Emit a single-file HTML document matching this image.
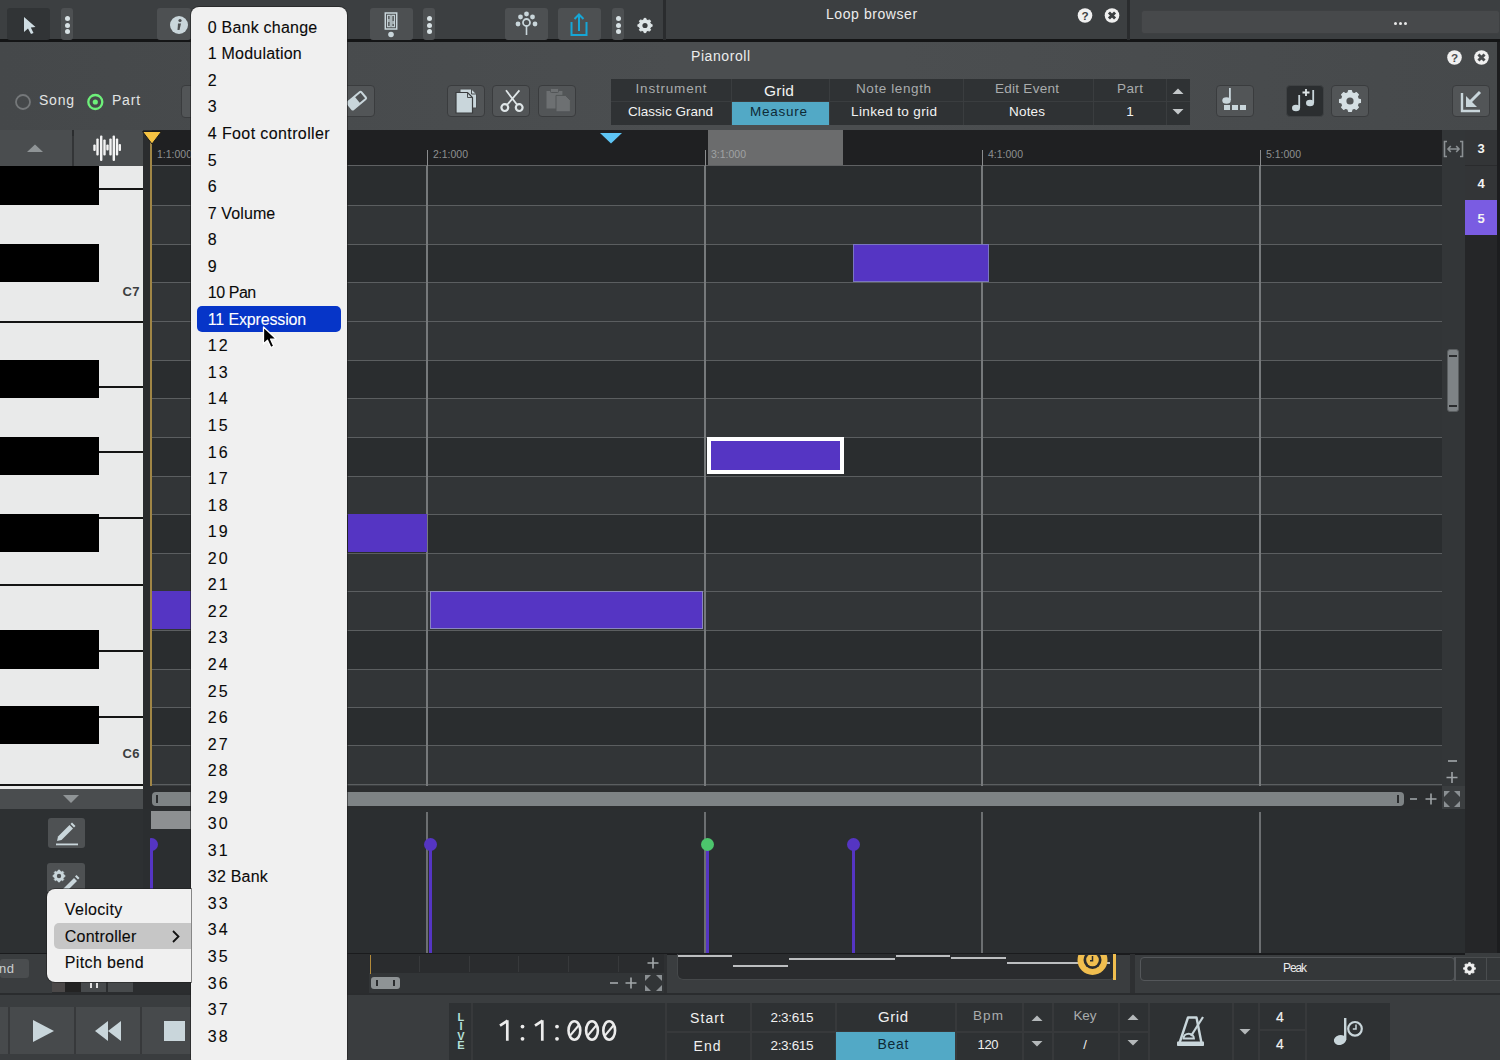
<!DOCTYPE html>
<html><head><meta charset="utf-8">
<style>
*{margin:0;padding:0;box-sizing:border-box}
html,body{width:1500px;height:1060px;overflow:hidden;background:#3b3e40;font-family:"Liberation Sans",sans-serif}
.a{position:absolute}
.t{position:absolute;white-space:nowrap;line-height:1}
svg{position:absolute;overflow:visible}
</style></head><body>
<div class="a" style="left:0px;top:0px;width:1500px;height:40px;background:#3c3f41"></div>
<div class="a" style="left:0px;top:39px;width:1500px;height:3px;background:#141516"></div>
<div class="a" style="left:7px;top:8px;width:43px;height:32px;background:#313436;border-radius:3px"></div>
<svg style="left:7px;top:8px;" width="43" height="32" viewBox="0 0 43 32"><path d="M17 9 L17 24 L21 20.5 L24 26 L26.5 25 L23.8 19.5 L28.5 19 Z" fill="#cfdde3"/></svg>
<div class="a" style="left:61px;top:8px;width:12px;height:32px;background:#4d5052;border-radius:3px"></div>
<div class="a" style="left:64.5px;top:16.0px;width:5px;height:5px;background:#d7e1e4;border-radius:50%"></div>
<div class="a" style="left:64.5px;top:22.5px;width:5px;height:5px;background:#d7e1e4;border-radius:50%"></div>
<div class="a" style="left:64.5px;top:29.0px;width:5px;height:5px;background:#d7e1e4;border-radius:50%"></div>
<div class="a" style="left:157px;top:8px;width:34px;height:32px;background:#4d5052;border-radius:3px"></div>
<svg style="left:157px;top:8px;" width="34" height="32" viewBox="0 0 34 32"><circle cx="22" cy="17" r="9" fill="#c9d6db"/><circle cx="23" cy="12.5" r="1.6" fill="#4d5052"/><path d="M21 15.5 L24 15.5 L22.5 22 L20.5 22 Z" fill="#4d5052"/></svg>
<div class="a" style="left:370px;top:8px;width:43px;height:32px;background:#4d5052;border-radius:3px"></div>
<svg style="left:370px;top:8px;" width="43" height="32" viewBox="0 0 43 32"><rect x="15.3" y="5" width="11.4" height="16" fill="none" stroke="#c9d6db" stroke-width="1.5"/><rect x="17.6" y="7.3" width="2.6" height="11.4" fill="none" stroke="#c9d6db" stroke-width="1.1"/><rect x="21.8" y="7.3" width="2.6" height="11.4" fill="none" stroke="#c9d6db" stroke-width="1.1"/><rect x="18.3" y="11" width="1.2" height="3" fill="#c9d6db"/><rect x="22.5" y="13" width="1.2" height="3" fill="#c9d6db"/><circle cx="21" cy="26.5" r="2.8" fill="#c9d6db"/></svg>
<div class="a" style="left:423px;top:8px;width:12px;height:32px;background:#4d5052;border-radius:3px"></div>
<div class="a" style="left:426.5px;top:16.0px;width:5px;height:5px;background:#d7e1e4;border-radius:50%"></div>
<div class="a" style="left:426.5px;top:22.5px;width:5px;height:5px;background:#d7e1e4;border-radius:50%"></div>
<div class="a" style="left:426.5px;top:29.0px;width:5px;height:5px;background:#d7e1e4;border-radius:50%"></div>
<div class="a" style="left:505px;top:8px;width:43px;height:32px;background:#4d5052;border-radius:3px"></div>
<svg style="left:505px;top:8px;" width="43" height="32" viewBox="0 0 43 32"><g fill="#c9d6db"><circle cx="21.5" cy="6" r="2.4"/><circle cx="15.5" cy="9" r="2.4"/><circle cx="27.5" cy="9" r="2.4"/><circle cx="13" cy="16" r="2.4"/><circle cx="30" cy="16" r="2.4"/></g><circle cx="21.5" cy="14.5" r="3.5" fill="none" stroke="#c9d6db" stroke-width="1.8"/><rect x="20.7" y="18" width="1.6" height="9" fill="#c9d6db"/></svg>
<div class="a" style="left:558px;top:8px;width:43px;height:32px;background:#4d5052;border-radius:3px"></div>
<svg style="left:558px;top:8px;" width="43" height="32" viewBox="0 0 43 32"><path d="M13.5 14 L13.5 27 L28.5 27 L28.5 14" fill="none" stroke="#16a6d6" stroke-width="2"/><path d="M21 23 L21 7 M16.5 11 L21 6.5 L25.5 11" fill="none" stroke="#16a6d6" stroke-width="2"/></svg>
<div class="a" style="left:612px;top:8px;width:12px;height:32px;background:#4d5052;border-radius:3px"></div>
<div class="a" style="left:615.5px;top:16.0px;width:5px;height:5px;background:#d7e1e4;border-radius:50%"></div>
<div class="a" style="left:615.5px;top:22.5px;width:5px;height:5px;background:#d7e1e4;border-radius:50%"></div>
<div class="a" style="left:615.5px;top:29.0px;width:5px;height:5px;background:#d7e1e4;border-radius:50%"></div>
<svg style="left:630px;top:10px;" width="30" height="30" viewBox="0 0 30 30"><polygon points="20.60,14.16 22.14,14.54 22.14,16.46 20.60,16.84 19.91,18.51 20.72,19.87 19.37,21.22 18.01,20.41 16.34,21.10 15.96,22.64 14.04,22.64 13.66,21.10 11.99,20.41 10.63,21.22 9.28,19.87 10.09,18.51 9.40,16.84 7.86,16.46 7.86,14.54 9.40,14.16 10.09,12.49 9.28,11.13 10.63,9.78 11.99,10.59 13.66,9.90 14.04,8.36 15.96,8.36 16.34,9.90 18.01,10.59 19.37,9.78 20.72,11.13 19.91,12.49" fill="#dfe6e8" stroke="#dfe6e8" stroke-width="0.86" stroke-linejoin="round"/><circle cx="15" cy="15.5" r="5.760000000000001" fill="#dfe6e8"/><circle cx="15" cy="15.5" r="2.6" fill="#3c3f41"/></svg>
<div class="a" style="left:663px;top:0px;width:3px;height:40px;background:#2a2c2e"></div>
<div class="t" style="font-size:14px;color:#ececec;letter-spacing:0.57px;line-height:16.8px;top:6.0px;left:826.0px;">Loop browser</div>
<svg style="left:1070px;top:0px;" width="60" height="40" viewBox="0 0 60 40"><circle cx="15" cy="15.5" r="7.3" fill="#f0f0f0"/><text x="15" y="19.515" text-anchor="middle" font-family="Liberation Sans" font-weight="bold" font-size="11.68" fill="#3c3f41">?</text><circle cx="42" cy="15.5" r="7.3" fill="#f0f0f0"/><path d="M38.934 12.434000000000001 L45.066 18.566 M45.066 12.434000000000001 L38.934 18.566" stroke="#3c3f41" stroke-width="2.92"/></svg>
<div class="a" style="left:1127px;top:0px;width:3px;height:40px;background:#2a2c2e"></div>
<div class="a" style="left:1141px;top:10px;width:359px;height:24px;background:#47494b;border-radius:3px;border:1px solid #3e4042"></div>
<div class="a" style="left:1393.5px;top:21.5px;width:3px;height:3px;background:#e8e8e8;border-radius:50%"></div>
<div class="a" style="left:1398.5px;top:21.5px;width:3px;height:3px;background:#e8e8e8;border-radius:50%"></div>
<div class="a" style="left:1403.5px;top:21.5px;width:3px;height:3px;background:#e8e8e8;border-radius:50%"></div>
<div class="a" style="left:0px;top:42px;width:1500px;height:88px;background:linear-gradient(90deg,#45484a 0%,#4b4e50 45%,#4b4e50 60%,#46494b 100%)"></div>
<div class="t" style="font-size:14px;color:#ececec;letter-spacing:0.57px;line-height:16.8px;top:48.0px;left:691.0px;">Pianoroll</div>
<svg style="left:1440px;top:42px;" width="60" height="30" viewBox="0 0 60 30"><circle cx="14.5" cy="15.5" r="7.3" fill="#f0f0f0"/><text x="14.5" y="19.515" text-anchor="middle" font-family="Liberation Sans" font-weight="bold" font-size="11.68" fill="#4a4d4f">?</text><circle cx="41.5" cy="15.5" r="7.3" fill="#f0f0f0"/><path d="M38.434 12.434000000000001 L44.566 18.566 M44.566 12.434000000000001 L38.434 18.566" stroke="#4a4d4f" stroke-width="2.92"/></svg>
<svg style="left:10px;top:89px;" width="100" height="26" viewBox="0 0 100 26"><circle cx="13" cy="13" r="7" fill="none" stroke="#75787a" stroke-width="1.8"/><circle cx="85.3" cy="13" r="7" fill="none" stroke="#6ef07a" stroke-width="2.3"/><circle cx="85.3" cy="13" r="2.6" fill="#6ef07a"/></svg>
<div class="t" style="font-size:14px;color:#e2e4e4;letter-spacing:0.77px;line-height:16.8px;top:92.3px;left:39.0px;">Song</div>
<div class="t" style="font-size:14px;color:#e2e4e4;letter-spacing:0.78px;line-height:16.8px;top:92.3px;left:112.0px;">Part</div>
<div class="a" style="left:181px;top:85px;width:20px;height:33px;background:#525557;border:1.5px solid #3a3c3e;border-radius:4px"></div>
<div class="a" style="left:337px;top:85px;width:38px;height:32px;background:#525557;border:1.5px solid #3a3c3e;border-radius:4px"></div>
<svg style="left:337px;top:85px;" width="38" height="32" viewBox="0 0 38 32"><g transform="rotate(-40 20 16)"><rect x="10" y="10" width="20" height="11" rx="2" fill="#c9d6db"/><rect x="21" y="12" width="7" height="7" fill="#4e5153"/></g></svg>
<div class="a" style="left:447px;top:85px;width:38px;height:32px;background:#525557;border:1.5px solid #3a3c3e;border-radius:4px"></div>
<svg style="left:447px;top:85px;" width="38" height="32" viewBox="0 0 38 32"><path d="M13 4 L24.5 4 L29.5 9 L29.5 23 L13 23 Z" fill="#c9d6db" stroke="#4a4d4f" stroke-width="1"/><path d="M24.5 4 L24.5 9 L29.5 9" fill="none" stroke="#4a4d4f" stroke-width="1"/><path d="M9 7.5 L20.5 7.5 L25.5 12.5 L25.5 28 L9 28 Z" fill="#c9d6db" stroke="#3a3c3e" stroke-width="1.2"/><path d="M20.5 7.5 L20.5 12.5 L25.5 12.5" fill="none" stroke="#4a4d4f" stroke-width="1"/></svg>
<div class="a" style="left:492px;top:85px;width:38px;height:32px;background:#525557;border:1.5px solid #3a3c3e;border-radius:4px"></div>
<svg style="left:492px;top:85px;" width="38" height="32" viewBox="0 0 38 32"><path d="M14 5.3 L25.3 20 M27.4 5.3 L15 20" stroke="#dfe6e8" stroke-width="1.8" fill="none"/><circle cx="12.8" cy="22.6" r="3.4" fill="none" stroke="#dfe6e8" stroke-width="2.2"/><circle cx="27.2" cy="22.6" r="3.4" fill="none" stroke="#dfe6e8" stroke-width="2.2"/></svg>
<div class="a" style="left:538px;top:85px;width:38px;height:32px;background:#525557;border:1.5px solid #3a3c3e;border-radius:4px"></div>
<svg style="left:538px;top:85px;" width="38" height="32" viewBox="0 0 38 32"><path d="M8.5 6 L24.4 6 L24.4 23.5 L8.5 23.5 Z" fill="#6d7072"/><rect x="12.5" y="3.5" width="8" height="4" rx="1" fill="#6d7072" stroke="#525557" stroke-width="1"/><path d="M18 10.4 L27.4 10.4 L32.4 15.4 L32.4 26.8 L18 26.8 Z" fill="#6d7072" stroke="#525557" stroke-width="1"/></svg>
<div class="a" style="left:611px;top:79px;width:579px;height:46px;background:#2f3234"></div>
<div class="a" style="left:611px;top:101px;width:579px;height:1px;background:#3a3d3f"></div>
<div class="a" style="left:731px;top:79px;width:1px;height:46px;background:#3a3d3f"></div>
<div class="a" style="left:829px;top:79px;width:1px;height:46px;background:#3a3d3f"></div>
<div class="a" style="left:963px;top:79px;width:1px;height:46px;background:#3a3d3f"></div>
<div class="a" style="left:1093px;top:79px;width:1px;height:46px;background:#3a3d3f"></div>
<div class="a" style="left:1166px;top:79px;width:1px;height:46px;background:#3a3d3f"></div>
<div class="a" style="left:732px;top:102px;width:97px;height:23px;background:#52a9c6"></div>
<div class="t" style="font-size:13.5px;color:#a9acad;letter-spacing:0.81px;line-height:16.2px;top:81.4px;left:635.5px;">Instrument</div>
<div class="t" style="font-size:15.5px;color:#f2f2f2;letter-spacing:0.23px;line-height:18.6px;top:81.6px;left:764.0px;">Grid</div>
<div class="t" style="font-size:13.5px;color:#a9acad;letter-spacing:0.60px;line-height:16.2px;top:81.4px;left:856.0px;">Note length</div>
<div class="t" style="font-size:13.5px;color:#a9acad;letter-spacing:0.27px;line-height:16.2px;top:81.4px;left:995.0px;">Edit Event</div>
<div class="t" style="font-size:13.5px;color:#a9acad;letter-spacing:0.41px;line-height:16.2px;top:81.4px;left:1117.0px;">Part</div>
<div class="t" style="font-size:13.5px;color:#f2f2f2;letter-spacing:0.02px;line-height:16.2px;top:104.4px;left:628.0px;">Classic Grand</div>
<div class="t" style="font-size:13.5px;color:#0e2a36;letter-spacing:0.75px;line-height:16.2px;top:104.4px;left:750.0px;">Measure</div>
<div class="t" style="font-size:13.5px;color:#f2f2f2;letter-spacing:0.38px;line-height:16.2px;top:104.4px;left:851.0px;">Linked to grid</div>
<div class="t" style="font-size:13.5px;color:#f2f2f2;letter-spacing:0.19px;line-height:16.2px;top:104.4px;left:1009.0px;">Notes</div>
<div class="t" style="font-size:13.5px;color:#f2f2f2;letter-spacing:0.00px;line-height:16.2px;top:104.4px;left:1126.2px;">1</div>
<svg style="left:1166px;top:79px;" width="24" height="46" viewBox="0 0 24 46"><path d="M6.5 15 L12 9.5 L17.5 15 Z" fill="#c4c8ca"/><path d="M6.5 30 L12 35.5 L17.5 30 Z" fill="#c4c8ca"/></svg>
<div class="a" style="left:1216px;top:85px;width:38px;height:32px;background:#525557;border:1.5px solid #3a3c3e;border-radius:4px"></div>
<svg style="left:1216px;top:85px;" width="38" height="32" viewBox="0 0 38 32"><ellipse cx="10.5" cy="15.5" rx="4.2" ry="3.2" fill="#c9d6db"/><rect x="13" y="3" width="1.8" height="12" fill="#c9d6db"/><rect x="8" y="20" width="6" height="5" fill="#c9d6db"/><rect x="16" y="20" width="6" height="5" fill="#c9d6db"/><rect x="24" y="20" width="6" height="5" fill="#c9d6db"/></svg>
<div class="a" style="left:1286px;top:85px;width:38px;height:32px;background:#2b2e30;border:1px solid #3f4244;border-radius:4px"></div>
<svg style="left:1286px;top:85px;" width="38" height="32" viewBox="0 0 38 32"><ellipse cx="10" cy="23" rx="4" ry="3.2" fill="#c9d6db"/><rect x="12.3" y="10" width="1.8" height="13" fill="#c9d6db"/><ellipse cx="24" cy="18" rx="4" ry="3.2" fill="#c9d6db"/><rect x="26.3" y="5" width="1.8" height="13" fill="#c9d6db"/><path d="M20 4 L20 11 M16.5 7.5 L23.5 7.5" stroke="#dfe6e8" stroke-width="1.8"/></svg>
<div class="a" style="left:1331px;top:85px;width:38px;height:32px;background:#525557;border:1.5px solid #3a3c3e;border-radius:4px"></div>
<svg style="left:1331px;top:85px;" width="38" height="32" viewBox="0 0 38 32"><polygon points="27.17,14.04 29.41,14.60 29.41,17.40 27.17,17.96 26.16,20.39 27.35,22.37 25.37,24.35 23.39,23.16 20.96,24.17 20.40,26.41 17.60,26.41 17.04,24.17 14.61,23.16 12.63,24.35 10.65,22.37 11.84,20.39 10.83,17.96 8.59,17.40 8.59,14.60 10.83,14.04 11.84,11.61 10.65,9.63 12.63,7.65 14.61,8.84 17.04,7.83 17.60,5.59 20.40,5.59 20.96,7.83 23.39,8.84 25.37,7.65 27.35,9.63 26.16,11.61" fill="#d5dfe3" stroke="#d5dfe3" stroke-width="1.26" stroke-linejoin="round"/><circle cx="19" cy="16" r="8.4" fill="#d5dfe3"/><circle cx="19" cy="16" r="3.6" fill="#525557"/></svg>
<div class="a" style="left:1452px;top:85px;width:38px;height:32px;background:#525557;border:1.5px solid #3a3c3e;border-radius:4px"></div>
<svg style="left:1452px;top:85px;" width="38" height="32" viewBox="0 0 38 32"><path d="M10 8 L10 26 L28 26" fill="none" stroke="#c9d6db" stroke-width="2.4"/><path d="M28 7 L17 18" stroke="#c9d6db" stroke-width="3"/><path d="M14 11 L14 22 L25 22 Z" fill="#c9d6db"/></svg>
<div class="a" style="left:0px;top:130px;width:1442px;height:36px;background:#2b2d2f"></div>
<div class="a" style="left:0px;top:130px;width:72px;height:36px;background:#4a4d4f"></div>
<div class="a" style="left:74px;top:130px;width:69px;height:36px;background:#4a4d4f"></div>
<div class="a" style="left:72px;top:136px;width:2px;height:30px;background:#333537"></div>
<svg style="left:0px;top:130px;" width="72" height="36" viewBox="0 0 72 36"><path d="M27 22 L35 14.5 L43 22 Z" fill="#8f9496"/></svg>
<svg style="left:74px;top:130px;" width="69" height="36" viewBox="0 0 69 36"><g fill="#f4f4f4"><rect x="19.3" y="14.5" width="2.4" height="6.5" rx="1"/><rect x="22.3" y="8.5" width="2.4" height="17.0" rx="1"/><rect x="26.0" y="5.5" width="2.4" height="25.5" rx="1"/><rect x="29.3" y="9.5" width="2.4" height="16.0" rx="1"/><rect x="32.3" y="14.5" width="2.4" height="6.0" rx="1"/><rect x="35.3" y="8.5" width="2.4" height="17.0" rx="1"/><rect x="38.6" y="5.5" width="2.4" height="25.5" rx="1"/><rect x="41.8" y="8.5" width="2.4" height="17.0" rx="1"/><rect x="44.6" y="14.0" width="2.4" height="7.0" rx="1"/></g></svg>
<div class="a" style="left:152px;top:130px;width:1290px;height:36px;background:#1f2022"></div>
<div class="a" style="left:708px;top:130px;width:135px;height:36px;background:#6b6c6d"></div>
<div class="a" style="left:152px;top:165px;width:1290px;height:2px;background:#5f6163"></div>
<div class="t" style="font-size:10.5px;color:#8e9091;letter-spacing:0.00px;line-height:12.6px;top:148.2px;left:157.0px;">1:1:000</div>
<div class="a" style="left:427px;top:150px;width:1px;height:16px;background:#8a8c8e"></div>
<div class="t" style="font-size:10.5px;color:#8e9091;letter-spacing:0.00px;line-height:12.6px;top:148.2px;left:433.0px;">2:1:000</div>
<div class="a" style="left:705px;top:150px;width:1px;height:16px;background:#8a8c8e"></div>
<div class="t" style="font-size:10.5px;color:#a0a2a3;letter-spacing:0.00px;line-height:12.6px;top:148.2px;left:711.0px;">3:1:000</div>
<div class="a" style="left:982px;top:150px;width:1px;height:16px;background:#8a8c8e"></div>
<div class="t" style="font-size:10.5px;color:#8e9091;letter-spacing:0.00px;line-height:12.6px;top:148.2px;left:988.0px;">4:1:000</div>
<div class="a" style="left:1260px;top:150px;width:1px;height:16px;background:#8a8c8e"></div>
<div class="t" style="font-size:10.5px;color:#8e9091;letter-spacing:0.00px;line-height:12.6px;top:148.2px;left:1266.0px;">5:1:000</div>
<svg style="left:598px;top:130px;" width="26" height="16" viewBox="0 0 26 16"><path d="M2 3 L24 3 L13 13.5 Z" fill="#5ec5f5"/></svg>
<div class="a" style="left:0px;top:166px;width:143px;height:623px;background:#e9eaea"></div>
<div class="a" style="left:143px;top:130px;width:9px;height:680px;background:#2a2c2e"></div>
<div class="a" style="left:99px;top:188px;width:44px;height:2px;background:#141414"></div>
<div class="a" style="left:0px;top:321px;width:143px;height:2px;background:#141414"></div>
<div class="a" style="left:99px;top:386px;width:44px;height:2px;background:#141414"></div>
<div class="a" style="left:99px;top:451px;width:44px;height:2px;background:#141414"></div>
<div class="a" style="left:99px;top:517px;width:44px;height:2px;background:#141414"></div>
<div class="a" style="left:0px;top:584px;width:143px;height:2px;background:#141414"></div>
<div class="a" style="left:99px;top:650px;width:44px;height:2px;background:#141414"></div>
<div class="a" style="left:99px;top:716px;width:44px;height:2px;background:#141414"></div>
<div class="a" style="left:0px;top:784px;width:143px;height:2px;background:#141414"></div>
<div class="a" style="left:0px;top:166px;width:99px;height:39px;background:#000"></div>
<div class="a" style="left:0px;top:244px;width:99px;height:38px;background:#000"></div>
<div class="a" style="left:0px;top:360px;width:99px;height:38px;background:#000"></div>
<div class="a" style="left:0px;top:437px;width:99px;height:38px;background:#000"></div>
<div class="a" style="left:0px;top:514px;width:99px;height:38px;background:#000"></div>
<div class="a" style="left:0px;top:630px;width:99px;height:39px;background:#000"></div>
<div class="a" style="left:0px;top:706px;width:99px;height:38px;background:#000"></div>
<div class="t" style="font-size:13px;color:#3c3e3f;letter-spacing:0.38px;line-height:15.6px;top:283.9px;left:122.5px;font-weight:bold;">C7</div>
<div class="t" style="font-size:13px;color:#3c3e3f;letter-spacing:0.38px;line-height:15.6px;top:745.9px;left:122.5px;font-weight:bold;">C6</div>
<div class="a" style="left:152px;top:166px;width:1290px;height:39px;background:#2a2d2f"></div>
<div class="a" style="left:152px;top:205px;width:1290px;height:39px;background:#323537"></div>
<div class="a" style="left:152px;top:244px;width:1290px;height:38px;background:#2a2d2f"></div>
<div class="a" style="left:152px;top:282px;width:1290px;height:39px;background:#323537"></div>
<div class="a" style="left:152px;top:321px;width:1290px;height:39px;background:#323537"></div>
<div class="a" style="left:152px;top:360px;width:1290px;height:38px;background:#2a2d2f"></div>
<div class="a" style="left:152px;top:398px;width:1290px;height:39px;background:#323537"></div>
<div class="a" style="left:152px;top:437px;width:1290px;height:39px;background:#2a2d2f"></div>
<div class="a" style="left:152px;top:476px;width:1290px;height:38px;background:#323537"></div>
<div class="a" style="left:152px;top:514px;width:1290px;height:39px;background:#2a2d2f"></div>
<div class="a" style="left:152px;top:553px;width:1290px;height:38px;background:#323537"></div>
<div class="a" style="left:152px;top:591px;width:1290px;height:39px;background:#323537"></div>
<div class="a" style="left:152px;top:630px;width:1290px;height:39px;background:#2a2d2f"></div>
<div class="a" style="left:152px;top:669px;width:1290px;height:38px;background:#323537"></div>
<div class="a" style="left:152px;top:707px;width:1290px;height:38px;background:#2a2d2f"></div>
<div class="a" style="left:152px;top:745px;width:1290px;height:39px;background:#323537"></div>
<div class="a" style="left:152px;top:204.7px;width:1290px;height:1.6px;background:#5b5e60"></div>
<div class="a" style="left:152px;top:243.7px;width:1290px;height:1.6px;background:#5b5e60"></div>
<div class="a" style="left:152px;top:281.7px;width:1290px;height:1.6px;background:#5b5e60"></div>
<div class="a" style="left:152px;top:320.7px;width:1290px;height:1.6px;background:#5b5e60"></div>
<div class="a" style="left:152px;top:359.7px;width:1290px;height:1.6px;background:#5b5e60"></div>
<div class="a" style="left:152px;top:397.7px;width:1290px;height:1.6px;background:#5b5e60"></div>
<div class="a" style="left:152px;top:436.7px;width:1290px;height:1.6px;background:#5b5e60"></div>
<div class="a" style="left:152px;top:475.7px;width:1290px;height:1.6px;background:#5b5e60"></div>
<div class="a" style="left:152px;top:513.7px;width:1290px;height:1.6px;background:#5b5e60"></div>
<div class="a" style="left:152px;top:552.7px;width:1290px;height:1.6px;background:#5b5e60"></div>
<div class="a" style="left:152px;top:590.7px;width:1290px;height:1.6px;background:#5b5e60"></div>
<div class="a" style="left:152px;top:629.7px;width:1290px;height:1.6px;background:#5b5e60"></div>
<div class="a" style="left:152px;top:668.7px;width:1290px;height:1.6px;background:#5b5e60"></div>
<div class="a" style="left:152px;top:706.7px;width:1290px;height:1.6px;background:#5b5e60"></div>
<div class="a" style="left:152px;top:744.7px;width:1290px;height:1.6px;background:#5b5e60"></div>
<div class="a" style="left:152px;top:783.7px;width:1290px;height:1.6px;background:#5b5e60"></div>
<div class="a" style="left:426.2px;top:166px;width:1.6px;height:620px;background:#76797b"></div>
<div class="a" style="left:704.2px;top:166px;width:1.6px;height:620px;background:#76797b"></div>
<div class="a" style="left:981.2px;top:166px;width:1.6px;height:620px;background:#76797b"></div>
<div class="a" style="left:1259.2px;top:166px;width:1.6px;height:620px;background:#76797b"></div>
<div class="a" style="left:150px;top:140px;width:2px;height:670px;background:#a08646"></div>
<svg style="left:140px;top:130px;" width="24" height="18" viewBox="0 0 24 18"><path d="M2.5 1.5 L21.5 1.5 L12 14 Z" fill="#f5c242" stroke="#1a1a1a" stroke-width="1"/></svg>
<div class="a" style="left:853px;top:244px;width:136px;height:38px;background:#5535c3;border:1px solid #7a76c0"></div>
<div class="a" style="left:707px;top:437px;width:137px;height:37px;background:#5535c3;border:4px solid #fff"></div>
<div class="a" style="left:348px;top:514px;width:79px;height:38px;background:#5535c3"></div>
<div class="a" style="left:430px;top:591px;width:273px;height:38px;background:#5535c3;border:1px solid #8a86c0"></div>
<div class="a" style="left:152px;top:591px;width:40px;height:38px;background:#5535c3"></div>
<div class="a" style="left:1442px;top:130px;width:23px;height:656px;background:#333638"></div>
<svg style="left:1442px;top:138px;" width="23" height="22" viewBox="0 0 23 22"><path d="M5 3.5 L2.5 3.5 L2.5 18.5 L5 18.5 M18 3.5 L20.5 3.5 L20.5 18.5 L18 18.5" fill="none" stroke="#8b9093" stroke-width="1.6"/><path d="M6 11 L17 11 M8.8 8 L6 11 L8.8 14 M14.2 8 L17 11 L14.2 14" fill="none" stroke="#8b9093" stroke-width="1.6"/></svg>
<div class="a" style="left:1447px;top:349px;width:12px;height:63px;background:#7e8386;border-radius:3px;border:1px solid #5a5e60"></div>
<div class="a" style="left:1449px;top:355px;width:8px;height:1.5px;background:#2a2c2e"></div>
<div class="a" style="left:1449px;top:405px;width:8px;height:1.5px;background:#2a2c2e"></div>
<div class="a" style="left:1448px;top:760px;width:9px;height:1.5px;background:#8b9093"></div>
<svg style="left:1444px;top:770px;" width="16" height="16" viewBox="0 0 16 16"><path d="M8 2 L8 13 M2.5 7.5 L13.5 7.5" stroke="#9ea3a6" stroke-width="1.6"/></svg>
<div class="a" style="left:1465px;top:130px;width:35px;height:823px;background:#252628"></div>
<div class="a" style="left:1465px;top:130px;width:32px;height:35px;background:#333537"></div>
<div class="a" style="left:1465px;top:165px;width:32px;height:35px;background:#333537;border-top:1px solid #2a2b2d"></div>
<div class="a" style="left:1465px;top:200px;width:32px;height:35px;background:#7a5ce2"></div>
<div class="t" style="font-size:13px;color:#f4f4f4;letter-spacing:0.00px;line-height:15.6px;top:140.9px;left:1477.4px;font-weight:bold;">3</div>
<div class="t" style="font-size:13px;color:#f4f4f4;letter-spacing:0.00px;line-height:15.6px;top:175.9px;left:1477.4px;font-weight:bold;">4</div>
<div class="t" style="font-size:13px;color:#f4f4f4;letter-spacing:0.00px;line-height:15.6px;top:210.9px;left:1477.4px;font-weight:bold;">5</div>
<div class="a" style="left:1497px;top:42px;width:3px;height:1018px;background:#1c1d1f"></div>
<div class="a" style="left:143px;top:786px;width:1299px;height:23px;background:#2b2d2f"></div>
<div class="a" style="left:0px;top:789px;width:143px;height:20px;background:#4a4d4f"></div>
<svg style="left:0px;top:789px;" width="143" height="20" viewBox="0 0 143 20"><path d="M63 6 L79 6 L71 14 Z" fill="#8f9496"/></svg>
<div class="a" style="left:152px;top:792px;width:1252px;height:14px;background:#7e8385;border-radius:4px"></div>
<div class="a" style="left:156px;top:795px;width:1.8px;height:8px;background:#2a2c2e"></div>
<div class="a" style="left:1397px;top:795px;width:1.8px;height:8px;background:#2a2c2e"></div>
<svg style="left:1404px;top:788px;" width="60" height="22" viewBox="0 0 60 22"><path d="M6 11 L13 11" stroke="#9ea3a6" stroke-width="1.6"/><path d="M27 5.5 L27 16.5 M21.5 11 L32.5 11" stroke="#9ea3a6" stroke-width="1.6"/><g fill="#8b9093"><path d="M40 3 L46 3 L40 9 Z"/><path d="M56 3 L50 3 L56 9 Z"/><path d="M40 19 L46 19 L40 13 Z"/><path d="M56 19 L50 19 L56 13 Z"/></g></svg>
<div class="a" style="left:0px;top:809px;width:1465px;height:145px;background:#2b2e30"></div>
<div class="a" style="left:0px;top:809px;width:143px;height:145px;background:#2d3032"></div>
<div class="a" style="left:48px;top:818px;width:37px;height:30px;background:#4e5153;border-radius:3px"></div>
<svg style="left:48px;top:818px;" width="37" height="30" viewBox="0 0 37 30"><path d="M10 18.5 L21.5 7 L25 10.5 L13.5 22 L9 23 Z" fill="#c9d6db"/><path d="M22.5 6 L24 4.5 L27.5 8 L26 9.5 Z" fill="#c9d6db"/><rect x="8" y="25.5" width="22" height="1.8" fill="#c9d6db"/></svg>
<div class="a" style="left:47px;top:863px;width:38px;height:30px;background:#4e5153;border-radius:3px"></div>
<svg style="left:47px;top:863px;" width="38" height="30" viewBox="0 0 38 30"><polygon points="16.67,11.88 17.95,12.20 17.95,13.80 16.67,14.12 16.09,15.51 16.77,16.64 15.64,17.77 14.51,17.09 13.12,17.67 12.80,18.95 11.20,18.95 10.88,17.67 9.49,17.09 8.36,17.77 7.23,16.64 7.91,15.51 7.33,14.12 6.05,13.80 6.05,12.20 7.33,11.88 7.91,10.49 7.23,9.36 8.36,8.23 9.49,8.91 10.88,8.33 11.20,7.05 12.80,7.05 13.12,8.33 14.51,8.91 15.64,8.23 16.77,9.36 16.09,10.49" fill="#c9d6db" stroke="#c9d6db" stroke-width="0.72" stroke-linejoin="round"/><circle cx="12" cy="13" r="4.800000000000001" fill="#c9d6db"/><circle cx="12" cy="13" r="2.2" fill="#4e5153"/><path d="M16 26 L27 15 L30 18 L19 29 Z" fill="#c9d6db"/><path d="M28 13.5 L29.5 12 L32.5 15 L31 16.5 Z" fill="#c9d6db"/></svg>
<div class="a" style="left:151px;top:811px;width:40px;height:18px;background:#8d9092"></div>
<div class="a" style="left:426px;top:812px;width:2px;height:142px;background:#6c6f71"></div>
<div class="a" style="left:704px;top:812px;width:2px;height:142px;background:#6c6f71"></div>
<div class="a" style="left:981px;top:812px;width:2px;height:142px;background:#6c6f71"></div>
<div class="a" style="left:1259px;top:812px;width:2px;height:142px;background:#6c6f71"></div>
<div class="a" style="left:150px;top:812px;width:1292px;height:142px;overflow:hidden">
<div class="a" style="left:0px;top:34px;width:2.5px;height:108px;background:#5535c3"></div>
<div class="a" style="left:-5.5px;top:26px;width:13px;height:13px;background:#5535c3;border-radius:50%"></div>
<div class="a" style="left:278.5px;top:34px;width:3px;height:108px;background:#5535c3"></div>
<div class="a" style="left:273.5px;top:26px;width:13px;height:13px;background:#5535c3;border-radius:50%"></div>
<div class="a" style="left:555.5px;top:34px;width:3px;height:108px;background:#5535c3"></div>
<div class="a" style="left:550.5px;top:26px;width:13px;height:13px;background:#4cc56c;border-radius:50%"></div>
<div class="a" style="left:701.5px;top:34px;width:3px;height:108px;background:#5535c3"></div>
<div class="a" style="left:696.5px;top:26px;width:13px;height:13px;background:#5535c3;border-radius:50%"></div>
</div>
<div class="a" style="left:0px;top:953px;width:1500px;height:42px;background:#3a3d3f"></div>
<div class="a" style="left:0px;top:953px;width:1465px;height:2px;background:#1a1b1d"></div>
<div class="a" style="left:0px;top:954px;width:143px;height:40px;background:#3a3d3f"></div>
<div class="a" style="left:0px;top:959px;width:29px;height:19px;background:#4a4d4f;border-radius:3px"></div>
<div class="t" style="font-size:13px;color:#c9cdcf;letter-spacing:0.53px;line-height:15.6px;top:960.9px;left:-1.0px;">nd</div>
<div class="a" style="left:52px;top:954px;width:140px;height:39px;background:#2b2d2f"></div>
<div class="a" style="left:52px;top:982px;width:13px;height:10px;background:#4b4848"></div>
<div class="a" style="left:65px;top:982px;width:16px;height:10px;background:#232323"></div>
<div class="a" style="left:81px;top:982px;width:25px;height:10px;background:#474a4c"></div>
<div class="a" style="left:108px;top:982px;width:25px;height:10px;background:#474a4c"></div>
<div class="a" style="left:90px;top:983px;width:2px;height:5px;background:#e0e0e0"></div>
<div class="a" style="left:96px;top:983px;width:2px;height:5px;background:#e0e0e0"></div>
<div class="a" style="left:340px;top:954px;width:29px;height:39px;background:#2b2d2f"></div>
<div class="a" style="left:369px;top:954px;width:295px;height:19px;background:#2a2c2e"></div>
<div class="a" style="left:369px;top:973px;width:295px;height:20px;background:#323537"></div>
<div class="a" style="left:419px;top:956px;width:1px;height:16px;background:#37393b"></div>
<div class="a" style="left:469px;top:956px;width:1px;height:16px;background:#37393b"></div>
<div class="a" style="left:518px;top:956px;width:1px;height:16px;background:#37393b"></div>
<div class="a" style="left:568px;top:956px;width:1px;height:16px;background:#37393b"></div>
<div class="a" style="left:618px;top:956px;width:1px;height:16px;background:#37393b"></div>
<div class="a" style="left:370px;top:955px;width:1px;height:19px;background:#b38a3a"></div>
<div class="a" style="left:371px;top:977px;width:29px;height:12px;background:#8e9395;border-radius:3px"></div>
<div class="a" style="left:376px;top:980px;width:1.5px;height:6px;background:#2a2c2e"></div>
<div class="a" style="left:393px;top:980px;width:1.5px;height:6px;background:#2a2c2e"></div>
<svg style="left:600px;top:954px;" width="64" height="40" viewBox="0 0 64 40"><path d="M53 3.5 L53 14.5 M47.5 9 L58.5 9" stroke="#a3a8ab" stroke-width="1.6"/><path d="M10 29 L18 29" stroke="#a3a8ab" stroke-width="1.6"/><path d="M31 23.5 L31 34.5 M25.5 29 L36.5 29" stroke="#a3a8ab" stroke-width="1.6"/><g fill="#8b9093"><path d="M45 21 L51 21 L45 27 Z"/><path d="M62 21 L56 21 L62 27 Z"/><path d="M45 37 L51 37 L45 31 Z"/><path d="M62 37 L56 37 L62 31 Z"/></g></svg>
<div class="a" style="left:664px;top:954px;width:3px;height:40px;background:#2e3032"></div>
<div class="a" style="left:677px;top:954px;width:439px;height:26px;background:#2a2c2e;border-radius:0 0 6px 6px;border:1px solid #45484a;border-top:none"></div>
<div class="a" style="left:678px;top:955px;width:54px;height:1.6px;background:#bcbec0"></div>
<div class="a" style="left:733px;top:965px;width:55px;height:1.6px;background:#bcbec0"></div>
<div class="a" style="left:789px;top:958px;width:106px;height:1.6px;background:#bcbec0"></div>
<div class="a" style="left:896px;top:955px;width:54px;height:1.6px;background:#bcbec0"></div>
<div class="a" style="left:951px;top:957px;width:55px;height:1.6px;background:#bcbec0"></div>
<div class="a" style="left:1007px;top:962px;width:103px;height:1.6px;background:#bcbec0"></div>
<div class="a" style="left:1070px;top:955px;width:50px;height:30px;overflow:hidden">
<svg style="left:6px;top:-11px;" width="34" height="34" viewBox="0 0 34 34"><circle cx="16.5" cy="16" r="15" fill="#f0be4f"/><circle cx="16.5" cy="16" r="9" fill="#2a2c2e"/><circle cx="16.5" cy="16" r="6.3" fill="#f0be4f"/><path d="M16.5 12 L16.5 16.8 L14 16.8" stroke="#2a2c2e" stroke-width="1.5" fill="none"/></svg>
</div>
<div class="a" style="left:1113px;top:954px;width:3px;height:26px;background:#f0be4f"></div>
<div class="a" style="left:1130px;top:954px;width:5px;height:40px;background:#2e3032"></div>
<div class="a" style="left:1140px;top:957px;width:315px;height:24px;background:#343739;border:1.5px solid #54575a;border-radius:4px"></div>
<div class="t" style="font-size:12px;color:#ececec;letter-spacing:-1.11px;line-height:14.4px;top:961.3px;left:1283.0px;">Peak</div>
<div class="a" style="left:1455px;top:957px;width:32px;height:24px;background:#343739;border:1.5px solid #4a4d4f;border-left:none"></div>
<div class="a" style="left:1487px;top:957px;width:13px;height:24px;background:#343739;border-top:1.5px solid #4a4d4f;border-bottom:1.5px solid #4a4d4f"></div>
<div class="a" style="left:1454px;top:957px;width:1.5px;height:24px;background:#54575a"></div>
<svg style="left:1455px;top:957px;" width="30" height="24" viewBox="0 0 30 24"><polygon points="19.17,10.38 20.45,10.70 20.45,12.30 19.17,12.62 18.59,14.01 19.27,15.14 18.14,16.27 17.01,15.59 15.62,16.17 15.30,17.45 13.70,17.45 13.38,16.17 11.99,15.59 10.86,16.27 9.73,15.14 10.41,14.01 9.83,12.62 8.55,12.30 8.55,10.70 9.83,10.38 10.41,8.99 9.73,7.86 10.86,6.73 11.99,7.41 13.38,6.83 13.70,5.55 15.30,5.55 15.62,6.83 17.01,7.41 18.14,6.73 19.27,7.86 18.59,8.99" fill="#f0f0f0" stroke="#f0f0f0" stroke-width="0.72" stroke-linejoin="round"/><circle cx="14.5" cy="11.5" r="4.800000000000001" fill="#f0f0f0"/><circle cx="14.5" cy="11.5" r="2.2" fill="#343739"/></svg>
<div class="a" style="left:0px;top:993px;width:1500px;height:3px;background:#2a2c2e"></div>
<div class="a" style="left:0px;top:995px;width:1500px;height:65px;background:#3a3d3f"></div>
<div class="a" style="left:0px;top:1007px;width:191px;height:47px;background:#474a4c"></div>
<div class="a" style="left:8px;top:1007px;width:1.5px;height:47px;background:#37393b"></div>
<div class="a" style="left:74px;top:1007px;width:1.5px;height:47px;background:#37393b"></div>
<div class="a" style="left:140px;top:1007px;width:1.5px;height:47px;background:#37393b"></div>
<svg style="left:0px;top:1007px;" width="191" height="47" viewBox="0 0 191 47"><path d="M33 13 L54 24 L33 35 Z" fill="#c9d6db"/><path d="M95 24 L108 14 L108 34 Z" fill="#c9d6db"/><path d="M108 24 L121 14 L121 34 Z" fill="#c9d6db"/><rect x="164" y="14" width="21" height="20" fill="#c9d6db"/></svg>
<div class="a" style="left:449px;top:1003px;width:941px;height:57px;background:#2e3133"></div>
<div class="a" style="left:471px;top:1003px;width:1.5px;height:57px;background:#37393b"></div>
<div class="t" style="font-size:11px;color:#b5e0d8;letter-spacing:0.00px;line-height:13.2px;top:1010.6px;left:457.6px;font-weight:bold;">L</div>
<div class="t" style="font-size:11px;color:#b5e0d8;letter-spacing:0.00px;line-height:13.2px;top:1020.2px;left:459.5px;font-weight:bold;">I</div>
<div class="t" style="font-size:11px;color:#b5e0d8;letter-spacing:0.00px;line-height:13.2px;top:1029.8px;left:457.3px;font-weight:bold;">V</div>
<div class="t" style="font-size:11px;color:#b5e0d8;letter-spacing:0.00px;line-height:13.2px;top:1039.4px;left:457.3px;font-weight:bold;">E</div>
<svg style="left:0;top:0" width="1500" height="1060" viewBox="0 0 1500 1060"><path d="M507.3 1040.8 L507.3 1020.3 M500.0 1025.6 L507.6 1020.6" stroke="#ececec" stroke-width="2.7" fill="none" stroke-linecap="butt"/><path d="M542.3 1040.8 L542.3 1020.3 M535.0 1025.6 L542.5999999999999 1020.6" stroke="#ececec" stroke-width="2.7" fill="none" stroke-linecap="butt"/><circle cx="522.5" cy="1026.6" r="1.9" fill="#ececec"/><circle cx="522.5" cy="1038.8" r="1.9" fill="#ececec"/><circle cx="557" cy="1026.6" r="1.9" fill="#ececec"/><circle cx="557" cy="1038.8" r="1.9" fill="#ececec"/><ellipse cx="574.4" cy="1030.5" rx="5.9" ry="9.2" fill="none" stroke="#ececec" stroke-width="2.6"/><path d="M570.1999999999999 1035.5 L578.6 1025.5" stroke="#ececec" stroke-width="2"/><ellipse cx="592" cy="1030.5" rx="5.9" ry="9.2" fill="none" stroke="#ececec" stroke-width="2.6"/><path d="M587.8 1035.5 L596.2 1025.5" stroke="#ececec" stroke-width="2"/><ellipse cx="609.2" cy="1030.5" rx="5.9" ry="9.2" fill="none" stroke="#ececec" stroke-width="2.6"/><path d="M605.0 1035.5 L613.4000000000001 1025.5" stroke="#ececec" stroke-width="2"/></svg>
<div class="a" style="left:665px;top:1003px;width:2px;height:57px;background:#37393b"></div>
<div class="a" style="left:667px;top:1031px;width:483px;height:1.5px;background:#37393b"></div>
<div class="a" style="left:750px;top:1003px;width:1.5px;height:57px;background:#37393b"></div>
<div class="a" style="left:835px;top:1003px;width:1.5px;height:57px;background:#37393b"></div>
<div class="a" style="left:955px;top:1003px;width:1.5px;height:57px;background:#37393b"></div>
<div class="a" style="left:1022px;top:1003px;width:1.5px;height:57px;background:#37393b"></div>
<div class="a" style="left:1052px;top:1003px;width:1.5px;height:57px;background:#37393b"></div>
<div class="a" style="left:1118px;top:1003px;width:1.5px;height:57px;background:#37393b"></div>
<div class="a" style="left:836px;top:1032px;width:119px;height:28px;background:#52a9c6"></div>
<div class="t" style="font-size:14px;color:#f0f0f0;letter-spacing:1.11px;line-height:16.8px;top:1010.0px;left:690.0px;">Start</div>
<div class="t" style="font-size:14px;color:#f0f0f0;letter-spacing:1.05px;line-height:16.8px;top:1038.0px;left:693.5px;">End</div>
<div class="t" style="font-size:13.5px;color:#f0f0f0;letter-spacing:-0.34px;line-height:16.2px;top:1010.4px;left:770.5px;">2:3:615</div>
<div class="t" style="font-size:13.5px;color:#f0f0f0;letter-spacing:-0.34px;line-height:16.2px;top:1038.4px;left:770.5px;">2:3:615</div>
<div class="t" style="font-size:15px;color:#f0f0f0;letter-spacing:0.55px;line-height:18.0px;top:1008.0px;left:878.0px;">Grid</div>
<div class="t" style="font-size:14px;color:#0e2a36;letter-spacing:0.73px;line-height:16.8px;top:1036.0px;left:877.5px;">Beat</div>
<div class="t" style="font-size:13.5px;color:#a9acad;letter-spacing:1.12px;line-height:16.2px;top:1008.4px;left:973.0px;">Bpm</div>
<div class="t" style="font-size:13px;color:#f0f0f0;letter-spacing:-0.35px;line-height:15.6px;top:1036.9px;left:977.5px;">120</div>
<div class="t" style="font-size:13.5px;color:#a9acad;letter-spacing:-0.13px;line-height:16.2px;top:1008.4px;left:1073.5px;">Key</div>
<div class="t" style="font-size:13px;color:#f0f0f0;letter-spacing:0.00px;line-height:15.6px;top:1036.9px;left:1083.2px;">/</div>
<svg style="left:1022px;top:1003px;" width="30" height="57" viewBox="0 0 30 57"><path d="M9.5 18 L15 12.5 L20.5 18 Z" fill="#b4b8ba"/><path d="M9.5 38 L15 43.5 L20.5 38 Z" fill="#b4b8ba"/></svg>
<svg style="left:1118px;top:1003px;" width="30" height="57" viewBox="0 0 30 57"><path d="M9.5 17 L15 11.5 L20.5 17 Z" fill="#b4b8ba"/><path d="M9.5 37 L15 42.5 L20.5 37 Z" fill="#b4b8ba"/></svg>
<div class="a" style="left:1148px;top:1003px;width:1.5px;height:57px;background:#37393b"></div>
<div class="a" style="left:1232px;top:1003px;width:1.5px;height:57px;background:#37393b"></div>
<div class="a" style="left:1258px;top:1003px;width:1.5px;height:57px;background:#37393b"></div>
<div class="a" style="left:1305px;top:1003px;width:1.5px;height:57px;background:#37393b"></div>
<div class="a" style="left:1259px;top:1029px;width:46px;height:1.5px;background:#37393b"></div>
<svg style="left:1148px;top:1003px;" width="84" height="57" viewBox="0 0 84 57"><path d="M31.5 40 L40 14.5 L48.5 14.5 L53.5 40" fill="none" stroke="#c9d6db" stroke-width="2.4" stroke-linejoin="round"/><rect x="29" y="38.5" width="27" height="4.5" rx="0.8" fill="#c9d6db"/><path d="M35.5 35.5 A5.2 4.8 0 0 1 45.9 35.5 Z" fill="none" stroke="#c9d6db" stroke-width="2"/><path d="M43 33 L55 14" stroke="#c9d6db" stroke-width="2.2"/></svg>
<svg style="left:1232px;top:1003px;" width="26" height="57" viewBox="0 0 26 57"><path d="M7.5 26 L13 31.5 L18.5 26 Z" fill="#b4b8ba"/></svg>
<div class="t" style="font-size:14px;color:#f0f0f0;letter-spacing:0.00px;line-height:16.8px;top:1009.0px;left:1276.1px;-webkit-text-stroke:0.2px #f0f0f0;">4</div>
<div class="t" style="font-size:14px;color:#f0f0f0;letter-spacing:0.00px;line-height:16.8px;top:1036.0px;left:1276.1px;-webkit-text-stroke:0.2px #f0f0f0;">4</div>
<svg style="left:1305px;top:1003px;" width="85" height="57" viewBox="0 0 85 57"><ellipse cx="35" cy="37" rx="6.2" ry="4.8" fill="#c9d6db" transform="rotate(-15 35 37)"/><rect x="39" y="15" width="2.4" height="22" fill="#c9d6db"/><circle cx="50" cy="25.8" r="6.8" fill="none" stroke="#c9d6db" stroke-width="2.2"/><path d="M51 21.5 L51 26 L47.8 26" stroke="#c9d6db" stroke-width="1.5" fill="none"/></svg>
<div class="a" style="left:190px;top:6px;width:158px;height:1060px;background:#1c1c1c;border-radius:9px;opacity:0.55"></div>
<div class="a" style="left:191px;top:7px;width:156px;height:1060px;background:#f0f0f0;border-radius:8px"></div>
<div class="a" style="left:197px;top:305.5px;width:144px;height:26.5px;background:#0635c8;border-radius:5px"></div>
<div class="t" style="font-size:16px;color:#0a0a0a;letter-spacing:0.22px;line-height:19.2px;top:17.7px;left:207.8px;-webkit-text-stroke:0.1px #0a0a0a;">0 Bank change</div>
<div class="t" style="font-size:16px;color:#0a0a0a;letter-spacing:0.21px;line-height:19.2px;top:44.3px;left:207.8px;-webkit-text-stroke:0.1px #0a0a0a;">1 Modulation</div>
<div class="t" style="font-size:16px;color:#0a0a0a;letter-spacing:0.00px;line-height:19.2px;top:70.8px;left:207.8px;-webkit-text-stroke:0.1px #0a0a0a;">2</div>
<div class="t" style="font-size:16px;color:#0a0a0a;letter-spacing:0.00px;line-height:19.2px;top:97.4px;left:207.8px;-webkit-text-stroke:0.1px #0a0a0a;">3</div>
<div class="t" style="font-size:16px;color:#0a0a0a;letter-spacing:0.39px;line-height:19.2px;top:123.9px;left:207.8px;-webkit-text-stroke:0.1px #0a0a0a;">4 Foot controller</div>
<div class="t" style="font-size:16px;color:#0a0a0a;letter-spacing:0.00px;line-height:19.2px;top:150.5px;left:207.8px;-webkit-text-stroke:0.1px #0a0a0a;">5</div>
<div class="t" style="font-size:16px;color:#0a0a0a;letter-spacing:0.00px;line-height:19.2px;top:177.0px;left:207.8px;-webkit-text-stroke:0.1px #0a0a0a;">6</div>
<div class="t" style="font-size:16px;color:#0a0a0a;letter-spacing:0.10px;line-height:19.2px;top:203.6px;left:207.8px;-webkit-text-stroke:0.1px #0a0a0a;">7 Volume</div>
<div class="t" style="font-size:16px;color:#0a0a0a;letter-spacing:0.00px;line-height:19.2px;top:230.1px;left:207.8px;-webkit-text-stroke:0.1px #0a0a0a;">8</div>
<div class="t" style="font-size:16px;color:#0a0a0a;letter-spacing:0.00px;line-height:19.2px;top:256.7px;left:207.8px;-webkit-text-stroke:0.1px #0a0a0a;">9</div>
<div class="t" style="font-size:16px;color:#0a0a0a;letter-spacing:-0.45px;line-height:19.2px;top:283.2px;left:207.8px;-webkit-text-stroke:0.1px #0a0a0a;">10 Pan</div>
<div class="t" style="font-size:16px;color:#ffffff;letter-spacing:-0.15px;line-height:19.2px;top:309.8px;left:207.8px;-webkit-text-stroke:0.1px #ffffff;">11 Expression</div>
<div class="t" style="font-size:16px;color:#0a0a0a;letter-spacing:2.14px;line-height:19.2px;top:336.3px;left:207.8px;-webkit-text-stroke:0.1px #0a0a0a;">12</div>
<div class="t" style="font-size:16px;color:#0a0a0a;letter-spacing:2.14px;line-height:19.2px;top:362.9px;left:207.8px;-webkit-text-stroke:0.1px #0a0a0a;">13</div>
<div class="t" style="font-size:16px;color:#0a0a0a;letter-spacing:2.14px;line-height:19.2px;top:389.4px;left:207.8px;-webkit-text-stroke:0.1px #0a0a0a;">14</div>
<div class="t" style="font-size:16px;color:#0a0a0a;letter-spacing:2.14px;line-height:19.2px;top:416.0px;left:207.8px;-webkit-text-stroke:0.1px #0a0a0a;">15</div>
<div class="t" style="font-size:16px;color:#0a0a0a;letter-spacing:2.14px;line-height:19.2px;top:442.5px;left:207.8px;-webkit-text-stroke:0.1px #0a0a0a;">16</div>
<div class="t" style="font-size:16px;color:#0a0a0a;letter-spacing:2.14px;line-height:19.2px;top:469.1px;left:207.8px;-webkit-text-stroke:0.1px #0a0a0a;">17</div>
<div class="t" style="font-size:16px;color:#0a0a0a;letter-spacing:2.14px;line-height:19.2px;top:495.6px;left:207.8px;-webkit-text-stroke:0.1px #0a0a0a;">18</div>
<div class="t" style="font-size:16px;color:#0a0a0a;letter-spacing:2.14px;line-height:19.2px;top:522.2px;left:207.8px;-webkit-text-stroke:0.1px #0a0a0a;">19</div>
<div class="t" style="font-size:16px;color:#0a0a0a;letter-spacing:2.14px;line-height:19.2px;top:548.7px;left:207.8px;-webkit-text-stroke:0.1px #0a0a0a;">20</div>
<div class="t" style="font-size:16px;color:#0a0a0a;letter-spacing:2.14px;line-height:19.2px;top:575.3px;left:207.8px;-webkit-text-stroke:0.1px #0a0a0a;">21</div>
<div class="t" style="font-size:16px;color:#0a0a0a;letter-spacing:2.14px;line-height:19.2px;top:601.8px;left:207.8px;-webkit-text-stroke:0.1px #0a0a0a;">22</div>
<div class="t" style="font-size:16px;color:#0a0a0a;letter-spacing:2.14px;line-height:19.2px;top:628.4px;left:207.8px;-webkit-text-stroke:0.1px #0a0a0a;">23</div>
<div class="t" style="font-size:16px;color:#0a0a0a;letter-spacing:2.14px;line-height:19.2px;top:654.9px;left:207.8px;-webkit-text-stroke:0.1px #0a0a0a;">24</div>
<div class="t" style="font-size:16px;color:#0a0a0a;letter-spacing:2.14px;line-height:19.2px;top:681.5px;left:207.8px;-webkit-text-stroke:0.1px #0a0a0a;">25</div>
<div class="t" style="font-size:16px;color:#0a0a0a;letter-spacing:2.14px;line-height:19.2px;top:708.0px;left:207.8px;-webkit-text-stroke:0.1px #0a0a0a;">26</div>
<div class="t" style="font-size:16px;color:#0a0a0a;letter-spacing:2.14px;line-height:19.2px;top:734.6px;left:207.8px;-webkit-text-stroke:0.1px #0a0a0a;">27</div>
<div class="t" style="font-size:16px;color:#0a0a0a;letter-spacing:2.14px;line-height:19.2px;top:761.1px;left:207.8px;-webkit-text-stroke:0.1px #0a0a0a;">28</div>
<div class="t" style="font-size:16px;color:#0a0a0a;letter-spacing:2.14px;line-height:19.2px;top:787.7px;left:207.8px;-webkit-text-stroke:0.1px #0a0a0a;">29</div>
<div class="t" style="font-size:16px;color:#0a0a0a;letter-spacing:2.14px;line-height:19.2px;top:814.2px;left:207.8px;-webkit-text-stroke:0.1px #0a0a0a;">30</div>
<div class="t" style="font-size:16px;color:#0a0a0a;letter-spacing:2.14px;line-height:19.2px;top:840.8px;left:207.8px;-webkit-text-stroke:0.1px #0a0a0a;">31</div>
<div class="t" style="font-size:16px;color:#0a0a0a;letter-spacing:0.21px;line-height:19.2px;top:867.3px;left:207.8px;-webkit-text-stroke:0.1px #0a0a0a;">32 Bank</div>
<div class="t" style="font-size:16px;color:#0a0a0a;letter-spacing:2.14px;line-height:19.2px;top:893.9px;left:207.8px;-webkit-text-stroke:0.1px #0a0a0a;">33</div>
<div class="t" style="font-size:16px;color:#0a0a0a;letter-spacing:2.14px;line-height:19.2px;top:920.4px;left:207.8px;-webkit-text-stroke:0.1px #0a0a0a;">34</div>
<div class="t" style="font-size:16px;color:#0a0a0a;letter-spacing:2.14px;line-height:19.2px;top:947.0px;left:207.8px;-webkit-text-stroke:0.1px #0a0a0a;">35</div>
<div class="t" style="font-size:16px;color:#0a0a0a;letter-spacing:2.14px;line-height:19.2px;top:973.5px;left:207.8px;-webkit-text-stroke:0.1px #0a0a0a;">36</div>
<div class="t" style="font-size:16px;color:#0a0a0a;letter-spacing:2.14px;line-height:19.2px;top:1000.1px;left:207.8px;-webkit-text-stroke:0.1px #0a0a0a;">37</div>
<div class="t" style="font-size:16px;color:#0a0a0a;letter-spacing:2.14px;line-height:19.2px;top:1026.6px;left:207.8px;-webkit-text-stroke:0.1px #0a0a0a;">38</div>
<svg style="left:258px;top:322px;" width="24" height="30" viewBox="0 0 24 30"><path d="M5.5 5 L5.5 22 L9.5 18.3 L12.8 25.5 L15.8 24.2 L12.6 17.2 L18 16.8 Z" fill="#000" stroke="#fff" stroke-width="1.3" stroke-linejoin="round"/></svg>
<div class="a" style="left:46px;top:888px;width:146px;height:95px;background:#1c1c1c;border-radius:9px 0 0 9px;opacity:0.5"></div>
<div class="a" style="left:47px;top:889px;width:144px;height:93px;background:#f0f0f0;border-radius:8px 0 0 8px"></div>
<div class="a" style="left:54px;top:923px;width:137px;height:26px;background:#c6c6c6;border-radius:5px 0 0 5px"></div>
<div class="t" style="font-size:16px;color:#0a0a0a;letter-spacing:0.33px;line-height:19.2px;top:900.1px;left:64.8px;-webkit-text-stroke:0.1px #0a0a0a;">Velocity</div>
<div class="t" style="font-size:16px;color:#0a0a0a;letter-spacing:0.23px;line-height:19.2px;top:926.6px;left:64.8px;-webkit-text-stroke:0.1px #0a0a0a;">Controller</div>
<div class="t" style="font-size:16px;color:#0a0a0a;letter-spacing:0.37px;line-height:19.2px;top:953.1px;left:64.8px;-webkit-text-stroke:0.1px #0a0a0a;">Pitch bend</div>
<svg style="left:168px;top:928px;" width="14" height="16" viewBox="0 0 14 16"><path d="M5 3 L10.5 8.5 L5 14" fill="none" stroke="#111" stroke-width="1.8"/></svg>
</body></html>
